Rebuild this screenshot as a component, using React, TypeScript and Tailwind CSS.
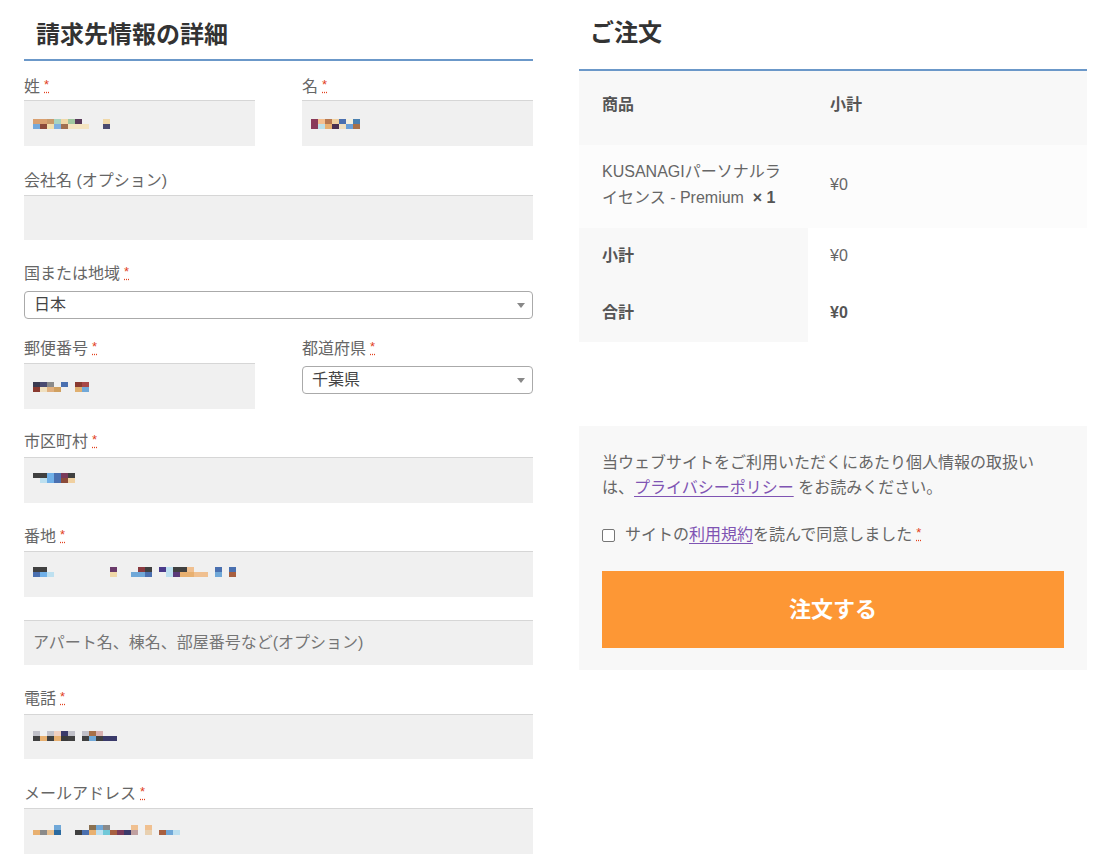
import React from "react";

type Col = [string, string];

const Pix = ({ cols }: { cols: (Col | null)[] }) => (
  <div className="flex items-start">
    {cols.map((c, i) =>
      c === null ? (
        <span key={i} className="inline-block w-[7px] h-[10px]" />
      ) : (
        <span key={i} className="inline-flex flex-col w-[7px]">
          <span className="block h-[5px]" style={{ background: c[0] }} />
          <span className="block h-[5px]" style={{ background: c[1] }} />
        </span>
      )
    )}
  </div>
);

const Req = () => (
  <abbr
    title="必須"
    className="ml-[4px] text-[#e2401c] text-[13px] relative -top-[3px] [text-decoration:underline_dotted] decoration-[#e2401c] decoration-2 underline-offset-[3px]"
  >
    *
  </abbr>
);

const Label = ({ children, req = true, className = "" }: { children: React.ReactNode; req?: boolean; className?: string }) => (
  <div className={"h-6 leading-6 text-[16px] text-[#666] " + className}>
    {children}
    {req && <Req />}
  </div>
);

const Input = ({ children, className = "", h = "h-[46px]" }: { children?: React.ReactNode; className?: string; h?: string }) => (
  <div className={"bg-[#f0f0f0] border-t border-[#d6d6d6] flex items-center pl-[9px] " + h + " " + className}>
    {children}
  </div>
);

const Select = ({ value, className = "" }: { value: string; className?: string }) => (
  <div className={"h-[28px] border border-[#aaa] rounded-[4px] bg-white flex items-center justify-between pl-[9px] pr-[7px] text-[16px] text-[#444] " + className}>
    <span>{value}</span>
    <svg width="8" height="5" viewBox="0 0 8 5"><path d="M0 0h8L4 5z" fill="#888" /></svg>
  </div>
);

export default function App() {
  return (
    <div className="font-['Liberation_Sans','Noto_Sans_CJK_JP',sans-serif] bg-white w-[1112px] h-[865px] overflow-hidden flex pl-[24px] gap-[46px]">
      {/* Left */}
      <div className="w-[509px] shrink-0">
        <div className="pt-[19px] pb-[8px] pl-[12px] border-b-2 border-[#6b98c9]">
          <h2 className="text-[24px] leading-8 font-bold text-[#333]">請求先情報の詳細</h2>
        </div>

        <div className="flex gap-[47px] mt-[14px]">
          <div className="w-[231px]">
            <Label>姓</Label>
            <Input className="mt-[1px]">
              <Pix cols={[["#d9a070", "#74a9dc"], ["#d9a070", "#8c4a3a"], ["#c99a6a", "#f3e1b0"], ["#a8d4c0", "#7fb0e0"], ["#f0d8a8", "#a07050"], ["#a0c8a0", "#f4e4c0"], ["#5a3a5a", "#f4e4c0"], ["#f0f0f0", "#f4e4c0"], null, null, ["#f0d8a8", "#4a4a70"]]} />
            </Input>
          </div>
          <div className="w-[231px]">
            <Label>名</Label>
            <Input className="mt-[1px]">
              <Pix cols={[["#8a3a5a", "#8a3a5a"], ["#f4c090", "#bde0e8"], ["#b87850", "#e8b070"], ["#f0d0a0", "#4a3050"], ["#4a70b0", "#f0e0c0"], ["#f4f0e0", "#6aa0d8"], ["#4a80b0", "#a87048"]]} />
            </Input>
          </div>
        </div>

        <Label req={false} className="mt-[23px]">会社名 (オプション)</Label>
        <Input className="mt-[2px]" h="h-[45px]" />

        <Label className="mt-[22px]">国または地域</Label>
        <Select value="日本" className="mt-[5px]" />

        <div className="flex gap-[47px] mt-[18px]">
          <div className="w-[231px]">
            <Label>郵便番号</Label>
            <Input className="mt-[2px]">
              <Pix cols={[["#3a3a50", "#8a3a30"], ["#4a4a70", "#f0e0c0"], ["#8a8a8a", "#e0b080"], ["#f0f0f0", "#d0a060"], ["#4a70b0", "#f0f0f0"], null, ["#8a3a30", "#e0b070"], ["#a84848", "#70a8d8"]]} />
            </Input>
          </div>
          <div className="w-[231px]">
            <Label>都道府県</Label>
            <Select value="千葉県" className="mt-[5px] h-[27px]" />
          </div>
        </div>

        <Label className="mt-[21px]">市区町村</Label>
        <Input className="mt-[3px]">
          <div className="-mt-[6px]">
            <Pix cols={[["#404040", "#f0f0f0"], ["#404040", "#bde0f0"], ["#70b0e8", "#70b0e8"], ["#4a70b0", "#4a70b0"], ["#7a3a5a", "#8a4a3a"], ["#404040", "#f0d0a0"]]} />
          </div>
        </Input>

        <Label className="mt-[22px]">番地</Label>
        <Input className="mt-[2px]">
          <div className="-mt-[6px]">
            <Pix cols={[["#404040", "#4a70b0"], ["#404040", "#70b0e8"], ["#f0f0f0", "#bde0f0"], null, null, null, null, null, null, null, null, ["#6a3a6a", "#f0d8a8"], null, null, ["#f0f0f0", "#70a8d8"], ["#8a3a40", "#70a8d8"], ["#404040", "#4a70b0"], null, ["#4a3a8a", "#f0f0f0"], ["#bde0f0", "#bde0f0"], ["#404040", "#5a3a7a"], ["#404040", "#e8b070"], ["#f0c090", "#e8b070"], ["#f0f0f0", "#f0c090"], ["#f0f0f0", "#f0c090"], null, ["#4a70b0", "#70a8d8"], null, ["#4a70b0", "#a86040"]]} />
          </div>
        </Input>
        <Input className="mt-[23px] text-[16px] text-[#757575]" h="h-[45px]">
          アパート名、棟名、部屋番号など(オプション)
        </Input>

        <Label className="mt-[22px]">電話</Label>
        <Input className="mt-[3px]" h="h-[45px]">
          <div className="-mt-[2px]">
            <Pix cols={[["#c0c0c8", "#404040"], ["#f0f0f0", "#e8b070"], ["#c0c0c8", "#404040"], ["#f0d0c0", "#e8b070"], ["#3a3a6a", "#3a3a3a"], ["#c0c0c8", "#404040"], null, ["#c0c0c8", "#404040"], ["#a87048", "#70a8d8"], ["#d8b0b0", "#404040"], ["#f0f0f0", "#3a3a6a"], ["#f0f0f0", "#3a3a6a"]]} />
          </div>
        </Input>

        <Label className="mt-[23px]">メールアドレス</Label>
        <Input className="mt-[2px]">
          <div className="-mt-[4px]">
            <Pix cols={[["#f0f0f0", "#e8b070"], ["#f0f0f0", "#8a8a8a"], ["#f0f0f0", "#e8c090"], ["#70a8d8", "#2a6aa0"], null, null, ["#f0f0f0", "#404040"], ["#f0f0f0", "#4a70b0"], ["#8a7050", "#e8b070"], ["#70a8d8", "#bde0f0"], ["#8a8a8a", "#70c8d8"], ["#f0f0f0", "#a86040"], ["#f0f0f0", "#7a3a5a"], ["#f0f0f0", "#3a3a6a"], ["#f0c090", "#c0a0a0"], ["#f0f0f0", "#f0f0f0"], ["#f0c090", "#e8d0b0"], ["#f0f0f0", "#f0f0f0"], ["#f0f0f0", "#a86040"], ["#f0f0f0", "#70a8d8"], ["#f0f0f0", "#bde0f0"]]} />
          </div>
        </Input>
      </div>

      {/* Right */}
      <div className="w-[508px] shrink-0">
        <div className="pt-[17px] pb-[20px] pl-[11px] border-b-2 border-[#6b98c9]">
          <h2 className="text-[24px] leading-8 font-bold text-[#333]">ご注文</h2>
        </div>

        <div className="text-[16px] text-[#666]">
          <div className="flex h-[74px] bg-[#f8f8f8] font-bold text-[#555] pb-[6px] items-center">
            <div className="w-[229px] pl-[23px]">商品</div>
            <div className="pl-[22px]">小計</div>
          </div>
          <div className="flex h-[83px] bg-[#fcfcfc] items-center pb-[4px]">
            <div className="w-[229px] pl-[23px] pr-[20px] leading-[26px]">
              KUSANAGIパーソナルライセンス - Premium&nbsp;&nbsp;<strong className="text-[#555]">×&nbsp;1</strong>
            </div>
            <div className="pl-[22px]">¥0</div>
          </div>
          <div className="flex h-[55px]">
            <div className="w-[229px] pl-[23px] bg-[#f8f8f8] font-bold text-[#555] flex items-center">小計</div>
            <div className="pl-[22px] flex items-center">¥0</div>
          </div>
          <div className="flex h-[59px]">
            <div className="w-[229px] pl-[23px] bg-[#f8f8f8] font-bold text-[#555] flex items-center">合計</div>
            <div className="pl-[22px] flex items-center font-bold text-[#555]">¥0</div>
          </div>
        </div>

        <div className="mt-[84px] bg-[#f8f8f8] h-[244px] px-[23px] pt-[24px] text-[16px] text-[#666]">
          <p className="leading-[25px]">
            当ウェブサイトをご利用いただくにあたり個人情報の取扱いは、<a className="text-[#7f54b3] underline underline-offset-[3px]">プライバシーポリシー</a> をお読みください。
          </p>
          <div className="flex items-center mt-[23px] h-6">
            <span className="inline-block w-[13px] h-[13px] border border-[#767676] rounded-[2px] bg-white mr-[10px]" />
            <span>
              サイトの<a className="text-[#7f54b3] underline underline-offset-[3px]">利用規約</a>を読んで同意しました
              <Req />
            </span>
          </div>
          <button className="mt-[24px] w-full h-[77px] bg-[#fd9735] text-white text-[22px] font-bold">注文する</button>
        </div>
      </div>
    </div>
  );
}
